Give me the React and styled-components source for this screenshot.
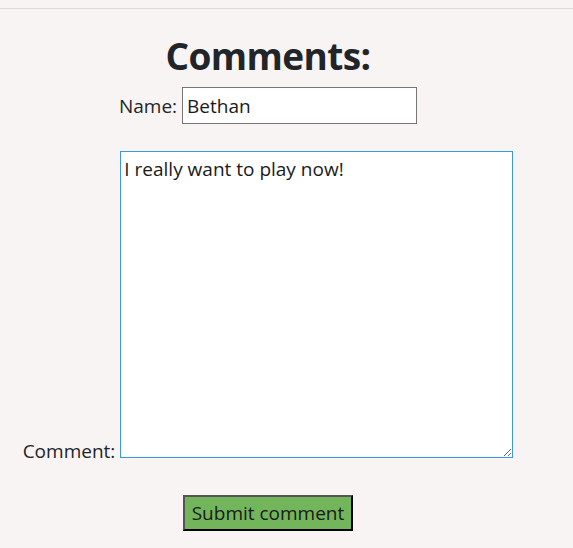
import React from 'react'
import styled, { createGlobalStyle } from 'styled-components'

const GlobalStyle = createGlobalStyle`
  body {
    margin: 0;
    background: #f8f4f3;
    font-family: "Open Sans", "Noto Sans", sans-serif;
    color: #212529;
  }
`

const Page = styled.div`
  padding-top: 8px;
`

const Rule = styled.hr`
  margin: 0;
  border: 0;
  border-top: 1px solid #dedada;
`

const Form = styled.form`
  width: 536px;
  display: flex;
  flex-direction: column;
  align-items: center;
`

const Title = styled.h1`
  margin: 21px 0 5px;
  font-size: 37px;
  line-height: 52px;
  font-weight: 700;
  letter-spacing: -0.6px;
`

const NameRow = styled.label`
  display: flex;
  align-items: center;
  gap: 5px;
  font-size: 19px;
  line-height: 26px;
`

const CommentRow = styled.label`
  display: block;
  margin-top: 27px;
  font-size: 19px;
  line-height: 26px;
  white-space: nowrap;
`

const NameInput = styled.input`
  box-sizing: border-box;
  width: 235px;
  height: 37px;
  padding: 0 4px;
  border: 1px solid #767676;
  background: #fff;
  font: inherit;
  color: #1a1a1a;
  outline: none;
`

const CommentBox = styled.textarea`
  box-sizing: border-box;
  width: 393px;
  height: 307px;
  margin: 0 0 0 5px;
  padding: 4px 3px;
  border: 1px solid #3a9ad9;
  background: #fff;
  font: inherit;
  color: #1a1a1a;
  resize: both;
  outline: none;
  vertical-align: baseline;
`

const Submit = styled.button`
  margin-top: 31px;
  box-sizing: border-box;
  height: 36px;
  padding: 0 7px;
  background: #73b55b;
  border: 2px solid;
  border-color: #555 #000 #000 #555;
  font: inherit;
  font-size: 19px;
  color: #1a1a1a;
`

export default function App () {
  return (
    <Page>
      <GlobalStyle />
      <Rule />
      <Form onSubmit={e => e.preventDefault()}>
        <Title>Comments:</Title>
        <NameRow>
          Name:
          <NameInput defaultValue='Bethan' />
        </NameRow>
        <CommentRow>
          Comment:
          <CommentBox defaultValue='I really want to play now!' />
        </CommentRow>
        <Submit type='submit'>Submit comment</Submit>
      </Form>
    </Page>
  )
}
